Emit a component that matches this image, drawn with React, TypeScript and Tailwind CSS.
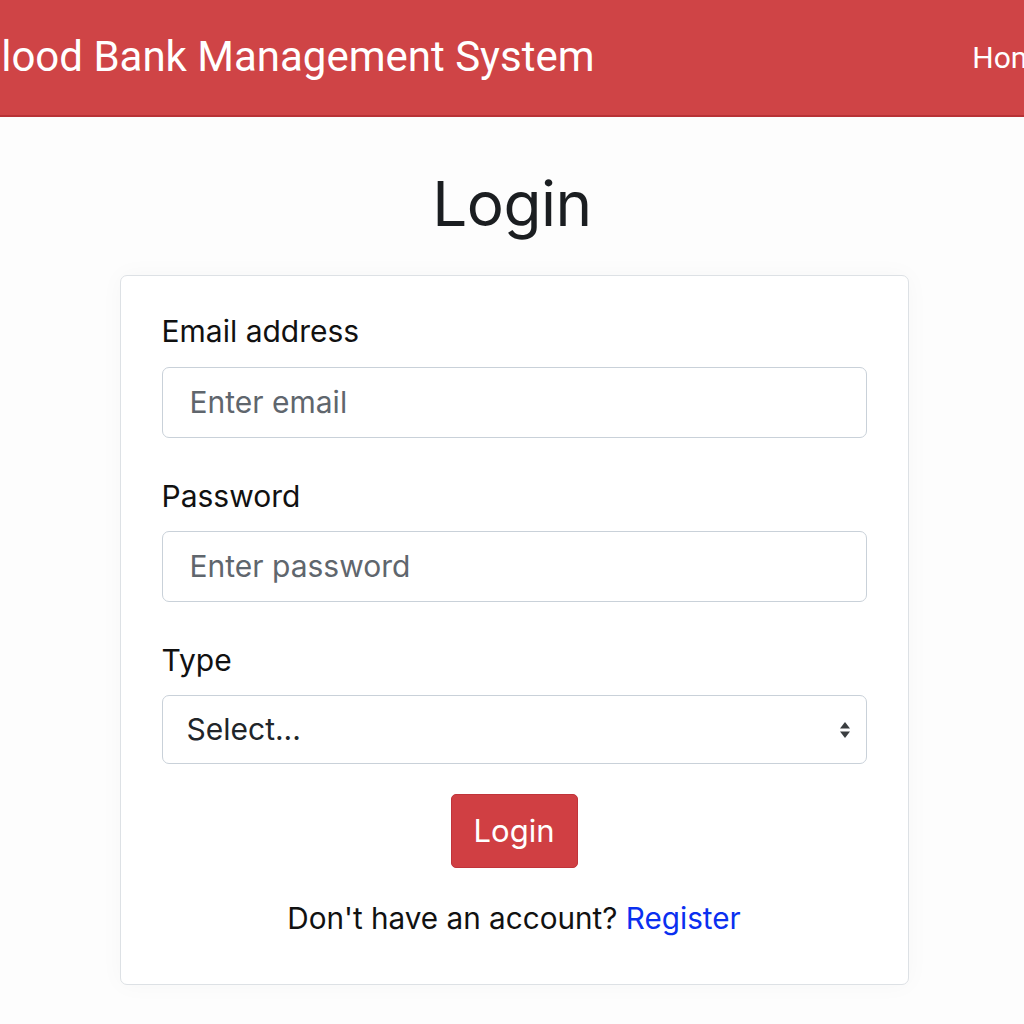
import React from "react";

export default function App() {
  return (
    <div className="w-[1024px] h-[1024px] overflow-hidden bg-[#fdfdfd] font-['Inter',sans-serif]">
      <header className="h-[117px] bg-[#cf4446] border-b-2 border-[#b83236] flex items-center justify-between overflow-hidden font-['Roboto',sans-serif]">
        <div className="ml-[-25px] text-white text-[42px] leading-none whitespace-nowrap mt-[-2px]">
          Blood Bank Management System
        </div>
        <div className="mr-[-29px] text-white text-[30px] leading-none whitespace-nowrap flex gap-8">
          <span>Home</span>
        </div>
      </header>
      <main className="flex flex-col items-center">
        <h1 className="mt-[56px] text-[62px] leading-none text-[#1b1e21] font-normal tracking-[-0.5px]">Login</h1>
        <div className="mt-[40px] ml-[4px] w-[789px] border border-[#dde1e5] rounded-[7px] bg-white shadow-[0_0_24px_rgba(0,0,0,0.03)] px-[41px] pt-[40px] pb-[50px]">
          <label className="block text-[30px] leading-none text-[#111]">Email address</label>
          <div className="mt-[21px] h-[71px] border border-[#c9d1d9] rounded-[7px] flex items-center px-[27px] text-[30px] text-[#5f666d]">
            Enter email
          </div>
          <label className="block mt-[43px] text-[30px] leading-none text-[#111]">Password</label>
          <div className="mt-[20px] h-[71px] border border-[#c9d1d9] rounded-[7px] flex items-center px-[27px] text-[30px] text-[#5f666d]">
            Enter password
          </div>
          <label className="block mt-[43px] text-[30px] leading-none text-[#111]">Type</label>
          <div className="mt-[20px] h-[69px] border border-[#c9d1d9] rounded-[7px] flex items-center justify-between pl-[24px] pr-[14px] text-[30px] text-[#212529]">
            <span>Select...</span>
            <svg width="14" height="18" viewBox="0 0 14 18">
              <path d="M7 1 L12 7.5 L2 7.5 Z" fill="#3a3d40" />
              <path d="M7 17 L12 10.5 L2 10.5 Z" fill="#3a3d40" />
            </svg>
          </div>
          <div className="flex justify-center mt-[30px]">
            <button className="w-[127px] h-[74px] bg-[#d03f43] border border-[#c0343a] rounded-[5px] text-white text-[31px]">
              Login
            </button>
          </div>
          <p className="mt-[36px] text-center text-[29.7px] leading-none text-[#111]">
            Don't have an account? <span className="text-[#0a2ff0]">Register</span>
          </p>
        </div>
      </main>
    </div>
  );
}
